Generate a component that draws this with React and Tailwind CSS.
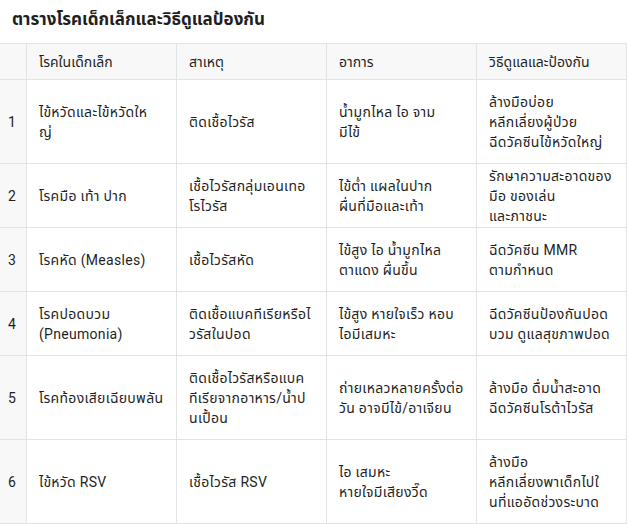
import React from "react";

const rows = [
  {
    h: "h-[84px]",
    cells: ["ไข้หวัดและไข้หวัดให\nญ่", "ติดเชื้อไวรัส", "น้ำมูกไหล ไอ จาม\nมีไข้", "ล้างมือบ่อย\nหลีกเลี่ยงผู้ป่วย\nฉีดวัคซีนไข้หวัดใหญ่"],
  },
  {
    h: "h-[64px]",
    cells: ["โรคมือ เท้า ปาก", "เชื้อไวรัสกลุ่มเอนเทอ\nโรไวรัส", "ไข้ต่ำ แผลในปาก\nผื่นที่มือและเท้า", "รักษาความสะอาดของ\nมือ ของเล่น\nและภาชนะ"],
  },
  {
    h: "h-[64px]",
    cells: ["โรคหัด (Measles)", "เชื้อไวรัสหัด", "ไข้สูง ไอ น้ำมูกไหล\nตาแดง ผื่นขึ้น", "ฉีดวัคซีน MMR\nตามกำหนด"],
  },
  {
    h: "h-[64px]",
    cells: ["โรคปอดบวม\n(Pneumonia)", "ติดเชื้อแบคทีเรียหรือไ\nวรัสในปอด", "ไข้สูง หายใจเร็ว หอบ\nไอมีเสมหะ", "ฉีดวัคซีนป้องกันปอด\nบวม ดูแลสุขภาพปอด"],
  },
  {
    h: "h-[84px]",
    cells: ["โรคท้องเสียเฉียบพลัน", "ติดเชื้อไวรัสหรือแบค\nทีเรียจากอาหาร/น้ำป\nนเปื้อน", "ถ่ายเหลวหลายครั้งต่อ\nวัน อาจมีไข้/อาเจียน", "ล้างมือ ดื่มน้ำสะอาด\nฉีดวัคซีนโรต้าไวรัส"],
  },
  {
    h: "h-[84px]",
    cells: ["ไข้หวัด RSV", "เชื้อไวรัส RSV", "ไอ เสมหะ\nหายใจมีเสียงวี๊ด", "ล้างมือ\nหลีกเลี่ยงพาเด็กไปใ\nนที่แออัดช่วงระบาด"],
  },
];

const headers = ["โรคในเด็กเล็ก", "สาเหตุ", "อาการ", "วิธีดูแลและป้องกัน"];

const font = { fontFamily: 'Roboto, "Noto Sans Thai", "Noto Sans", Tahoma, sans-serif' };

export default function App() {
  return (
    <div className="w-[627px] h-[524px] bg-white text-[#1f1f1f] overflow-hidden" style={font}>
      <h2 className="h-[43px] pl-3 pt-[7px] text-[17px] font-bold leading-[24px]">
        ตารางโรคเด็กเล็กและวิธีดูแลป้องกัน
      </h2>
      <div className="grid grid-cols-[27px_150px_150px_150px_150px] text-[14px] leading-[20px]">
        <div className="h-[37px] border-t border-r border-b border-[#e3e3e3] bg-[#f8f8f8]"></div>
        {headers.map((t) => (
          <div
            key={t}
            className="h-[37px] flex items-center px-3 border-t border-r border-b border-[#e3e3e3] bg-[#f8f8f8]"
          >
            {t}
          </div>
        ))}
        {rows.map((row, i) => (
          <React.Fragment key={i}>
            <div className={`${row.h} flex items-center pl-2 border-r border-b border-[#e3e3e3] bg-[#f8f8f8]`}>
              {i + 1}
            </div>
            {row.cells.map((c, j) => (
              <div
                key={j}
                className={`${row.h} flex items-center px-3 border-r border-b border-[#e3e3e3]`}
              >
                <div className="whitespace-pre tracking-[0.3px]">{c}</div>
              </div>
            ))}
          </React.Fragment>
        ))}
      </div>
    </div>
  );
}
